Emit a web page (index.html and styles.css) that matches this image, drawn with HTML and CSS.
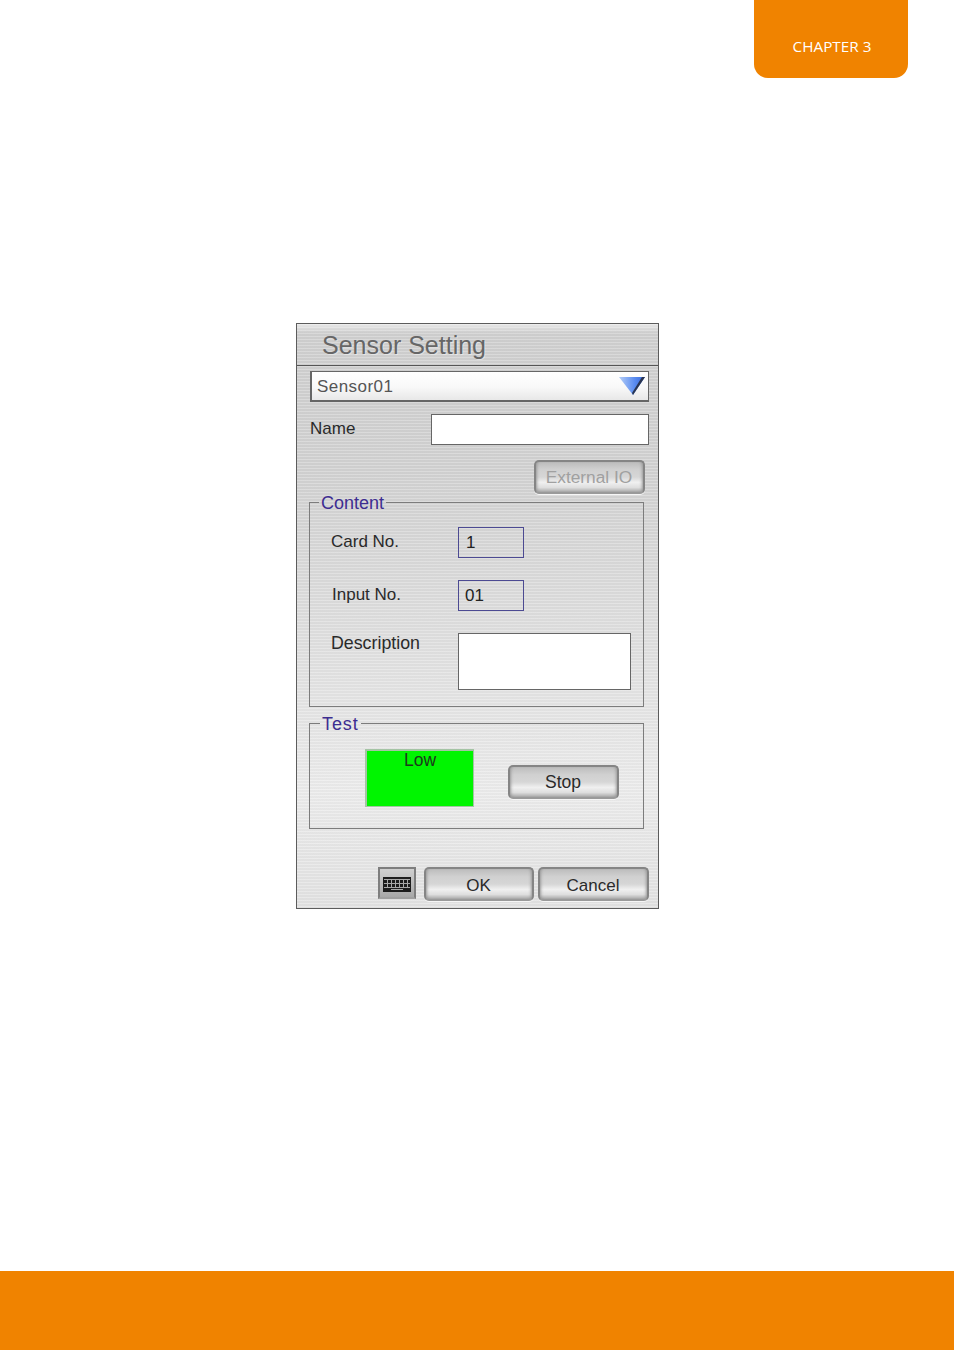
FILE: index.html
```html
<!DOCTYPE html>
<html lang="en">
<head>
<meta charset="utf-8">
<title>Sensor Setting</title>
<link rel="stylesheet" href="styles.css">
</head>
<body>
<div class="page">
  <header class="top"><div class="tab">CHAPTER 3</div></header>
  <main class="main">
    <section class="dialog">
      <h1 class="title">Sensor Setting</h1>
      <div class="combo">
        <span>Sensor01</span>
        <svg class="arrow" width="28" height="20" viewBox="0 0 28 20">
          <defs><linearGradient id="ag" x1="0" y1="0" x2="1" y2="0"><stop offset="0" stop-color="#b4cdf7"/><stop offset="0.6" stop-color="#5a8cf0"/><stop offset="1" stop-color="#3a68d8"/></linearGradient></defs>
          <polygon points="1,1 27,1 15,19" fill="url(#ag)"/>
          <polygon points="27,1 24,1 14,17 15,19" fill="#2a3550"/>
        </svg>
      </div>
      <div class="name-row">
        <label class="lbl">Name</label>
        <div class="field name-field"></div>
      </div>
      <div class="ext-row"><button class="btn btn-ext">External IO</button></div>
      <fieldset class="group content">
        <legend>Content</legend>
        <div class="row row-card"><span class="lbl">Card No.</span><div class="num">1</div></div>
        <div class="row row-input"><span class="lbl lbl-input">Input No.</span><div class="num">01</div></div>
        <div class="row row-desc"><span class="lbl lbl-desc">Description</span><div class="field desc"></div></div>
      </fieldset>
      <fieldset class="group test">
        <legend>Test</legend>
        <div class="test-row">
          <div class="status">Low</div>
          <button class="btn btn-stop">Stop</button>
        </div>
      </fieldset>
      <div class="actions">
        <button class="kbd" aria-label="Keyboard">
          <svg width="28" height="15" viewBox="0 0 28 15">
            <rect width="28" height="15" fill="#1c1c1c"/>
            <g fill="#a8a8a8">
              <rect x="1" y="2" width="26" height="1"/>
              <rect x="1" y="6" width="26" height="1"/>
              <rect x="1" y="10" width="26" height="1"/>
              <rect x="4" y="3" width="1" height="7"/><rect x="8" y="3" width="1" height="7"/>
              <rect x="12" y="3" width="1" height="7"/><rect x="16" y="3" width="1" height="7"/>
              <rect x="20" y="3" width="1" height="7"/><rect x="24" y="3" width="1" height="7"/>
              <rect x="8" y="12" width="12" height="1"/>
            </g>
          </svg>
        </button>
        <button class="btn btn-ok">OK</button>
        <button class="btn btn-cancel">Cancel</button>
      </div>
    </section>
  </main>
  <footer class="bottom"></footer>
</div>
</body>
</html>
```
FILE: styles.css
```css
* { box-sizing: border-box; }
html, body { margin: 0; padding: 0; background: #fff; }
.page {
  width: 954px;
  height: 1350px;
  display: flex;
  flex-direction: column;
  font-family: "Liberation Sans", Arial, sans-serif;
}
.top { height: 323px; display: flex; justify-content: flex-end; padding-right: 46px; }
.tab {
  width: 154px;
  height: 78px;
  background: #f08300;
  border-radius: 0 0 14px 14px;
  color: #fff;
  font: 15.3px/1 "Open Sans", sans-serif;
  text-align: center;
  padding: 39px 0 0 2px;
}
.main { flex: 1; padding-left: 296px; }
.bottom { height: 79px; background: #f08300; }

.dialog {
  width: 363px;
  height: 586px;
  border: 1px solid #5c5c5c;
  background:
    repeating-linear-gradient(180deg, rgba(255,255,255,.2) 0 1px, rgba(0,0,0,.02) 1px 3px),
    linear-gradient(180deg, #d0d0d0 0, #d2d2d2 25%, #e0e0e0 55%, #ececec 80%, #e2e2e2 100%);
  color: #222;
}
.title {
  margin: 0;
  height: 42px;
  padding: 5px 0 0 25px;
  border-bottom: 1px solid #555;
  font-size: 25px;
  line-height: 32px;
  font-weight: 400;
  color: #666;
  text-shadow: 1px 1px 0 rgba(255,255,255,.35);
  background: linear-gradient(180deg, rgba(255,255,255,.55) 0, rgba(255,255,255,0) 22%);
}
.combo {
  margin: 5px 0 0 13px;
  width: 339px;
  height: 31px;
  border: 2px solid #666;
  border-width: 1px 1px 2px 2px;
  background: linear-gradient(180deg, #fff 0, #f8f8f8 55%, #e8e8e8 100%);
  display: flex;
  align-items: center;
  justify-content: space-between;
  padding: 2px 2px 0 5px;
  font-size: 17px;
  letter-spacing: .45px;
  color: #555;
}
.arrow { display: block; margin-top: -2px; }
.lbl { font-size: 17px; line-height: 22px; color: #2a2a2a; }
.field { background: #fff; border: 1px solid #666; }
.name-row {
  margin: 12px 0 0 13px;
  display: grid;
  grid-template-columns: 121px 218px;
  height: 31px;
}
.name-row .lbl { line-height: 29px; }
.ext-row { height: 34px; margin-top: 15px; padding-left: 237px; }
.btn {
  display: block;
  padding: 2px 1px 0 0;
  border: 2px solid #858585;
  border-bottom-color: #9a9a9a;
  border-radius: 5px;
  font: 17px/1 "Liberation Sans", Arial, sans-serif;
  color: #2a2a2a;
  background: linear-gradient(180deg, #bcbcbc 0, #d0d0d0 25%, #d6d6d6 50%, #f0f0f0 68%, #dedede 85%, #a8a8a8 100%);
  box-shadow: 0 1px 0 #f6f6f6, inset 3px 0 3px -2px #999, inset -3px 0 3px -2px #999;
}
.btn-ext { width: 111px; height: 34px; color: #a0a0a0; font-size: 17.3px; }
.group {
  margin: 0 0 0 12px;
  width: 335px;
  padding: 0;
  border: 1px solid #7c7c7c;
  min-width: 0;
}
.group legend {
  margin-left: 9px;
  padding: 0 2px;
  font-size: 18px;
  line-height: 16px;
  color: #3d2d91;
  transform: translateY(1px);
}
.content { height: 213px; margin-top: 0; }
.test legend { margin-left: 10px; letter-spacing: .9px; }
.row { display: grid; grid-template-columns: 127px auto; padding-left: 21px; }
.row-card { margin-top: 17px; height: 31px; }
.row-input { margin-top: 22px; height: 31px; }
.row-desc { margin-top: 22px; }
.row .lbl { line-height: 29px; }
.row .lbl-input { padding-left: 1px; }
.row .lbl-desc { line-height: 20px; font-size: 17.8px; }
.num {
  width: 66px;
  height: 31px;
  border: 1px solid #4c4a92;
  font-size: 17px;
  line-height: 30px;
  padding-left: 7px;
  color: #222;
}
.row-input .num { padding-left: 6px; }
.desc { width: 173px; height: 57px; }
.test { height: 114px; margin-top: 8px; }
.test-row { display: flex; padding: 18px 0 0 55px; }
.status {
  width: 109px;
  height: 58px;
  background: #00f500;
  border: 2px solid #a4c4a4;
  border-width: 2px 1px 1px 2px;
  text-align: center;
  font-size: 17.5px;
  line-height: 18px;
  color: #1c3a1c;
}
.btn-stop { width: 111px; height: 34px; margin: 16px 0 0 34px; font-size: 17.5px; }
.actions { display: flex; margin: 38px 0 0 81px; }
.kbd {
  width: 38px;
  height: 32px;
  padding: 2px 0 0;
  border: 2px solid #7e7e7e;
  border-bottom-color: #a0a0a0;
  background: linear-gradient(180deg, #d0d0d0 0, #a8a8a8 100%);
  display: flex;
  align-items: center;
  justify-content: center;
}
.btn-ok { width: 110px; height: 34px; margin-left: 8px; }
.btn-cancel { width: 111px; height: 34px; margin-left: 4px; }
```
